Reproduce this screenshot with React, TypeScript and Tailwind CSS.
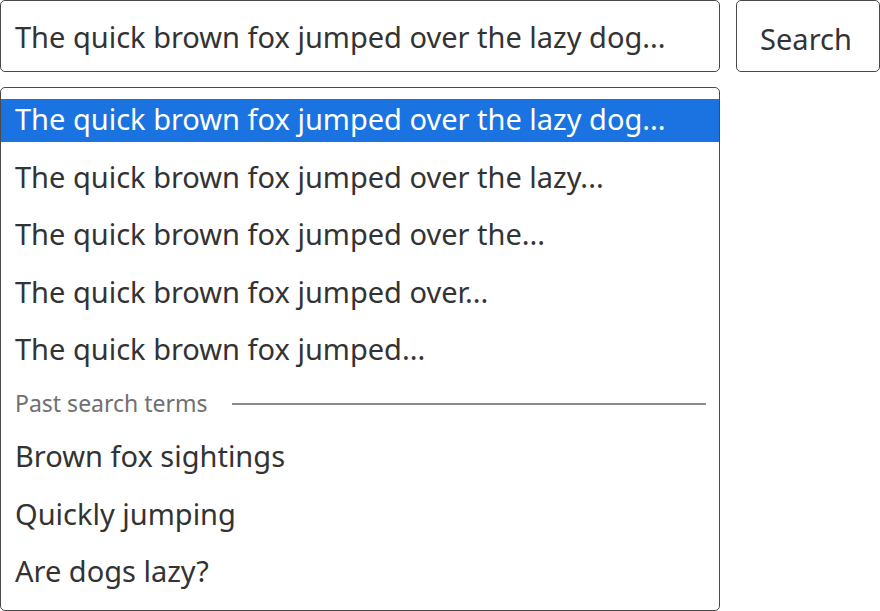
import React from "react";

const suggestions = [
  "The quick brown fox jumped over the lazy dog...",
  "The quick brown fox jumped over the lazy...",
  "The quick brown fox jumped over the...",
  "The quick brown fox jumped over...",
  "The quick brown fox jumped...",
];

const past = ["Brown fox sightings", "Quickly jumping", "Are dogs lazy?"];

export default function App() {
  return (
    <div
      className="w-[880px] h-[611px] bg-white text-[#333333]"
      style={{ fontFamily: '"Noto Sans", sans-serif' }}
    >
      <div className="flex gap-4">
        <div className="w-[720px] h-[72px] border border-[#4a4a4a] rounded-[5px] flex items-center px-[14px] text-[29px] leading-none">
          The quick brown fox jumped over the lazy dog...
        </div>
        <button className="w-[144px] h-[72px] border border-[#4a4a4a] rounded-[5px] flex items-center justify-center pt-[4px] pr-[4px] text-[29px] leading-none text-[#333333]">
          Search
        </button>
      </div>
      <div className="mt-[15px] w-[720px] h-[524px] border border-[#4a4a4a] rounded-[5px] pt-[11px] flex flex-col">
        {suggestions.map((s, i) => (
          <div
            key={s}
            className={
              "h-[43px] shrink-0 mb-[14.5px] flex items-center px-[14px] pb-[4px] text-[29px] leading-none whitespace-nowrap " +
              (i === 0 ? "bg-[#1a73e0] text-white" : "text-[#333333]")
            }
          >
            {s}
          </div>
        ))}
        <div className="flex items-center h-[35px] shrink-0 mb-[14.5px] px-[14px] gap-6">
          <span className="text-[23px] leading-none text-[#707070] whitespace-nowrap pb-[2px]">
            Past search terms
          </span>
          <div className="flex-1 h-[2px] bg-[#8a8a8a] mr-[-1px]" />
        </div>
        {past.map((s) => (
          <div
            key={s}
            className="h-[43px] shrink-0 mb-[14.5px] flex items-center px-[14px] pb-[4px] text-[29px] leading-none text-[#333333] whitespace-nowrap"
          >
            {s}
          </div>
        ))}
      </div>
    </div>
  );
}
